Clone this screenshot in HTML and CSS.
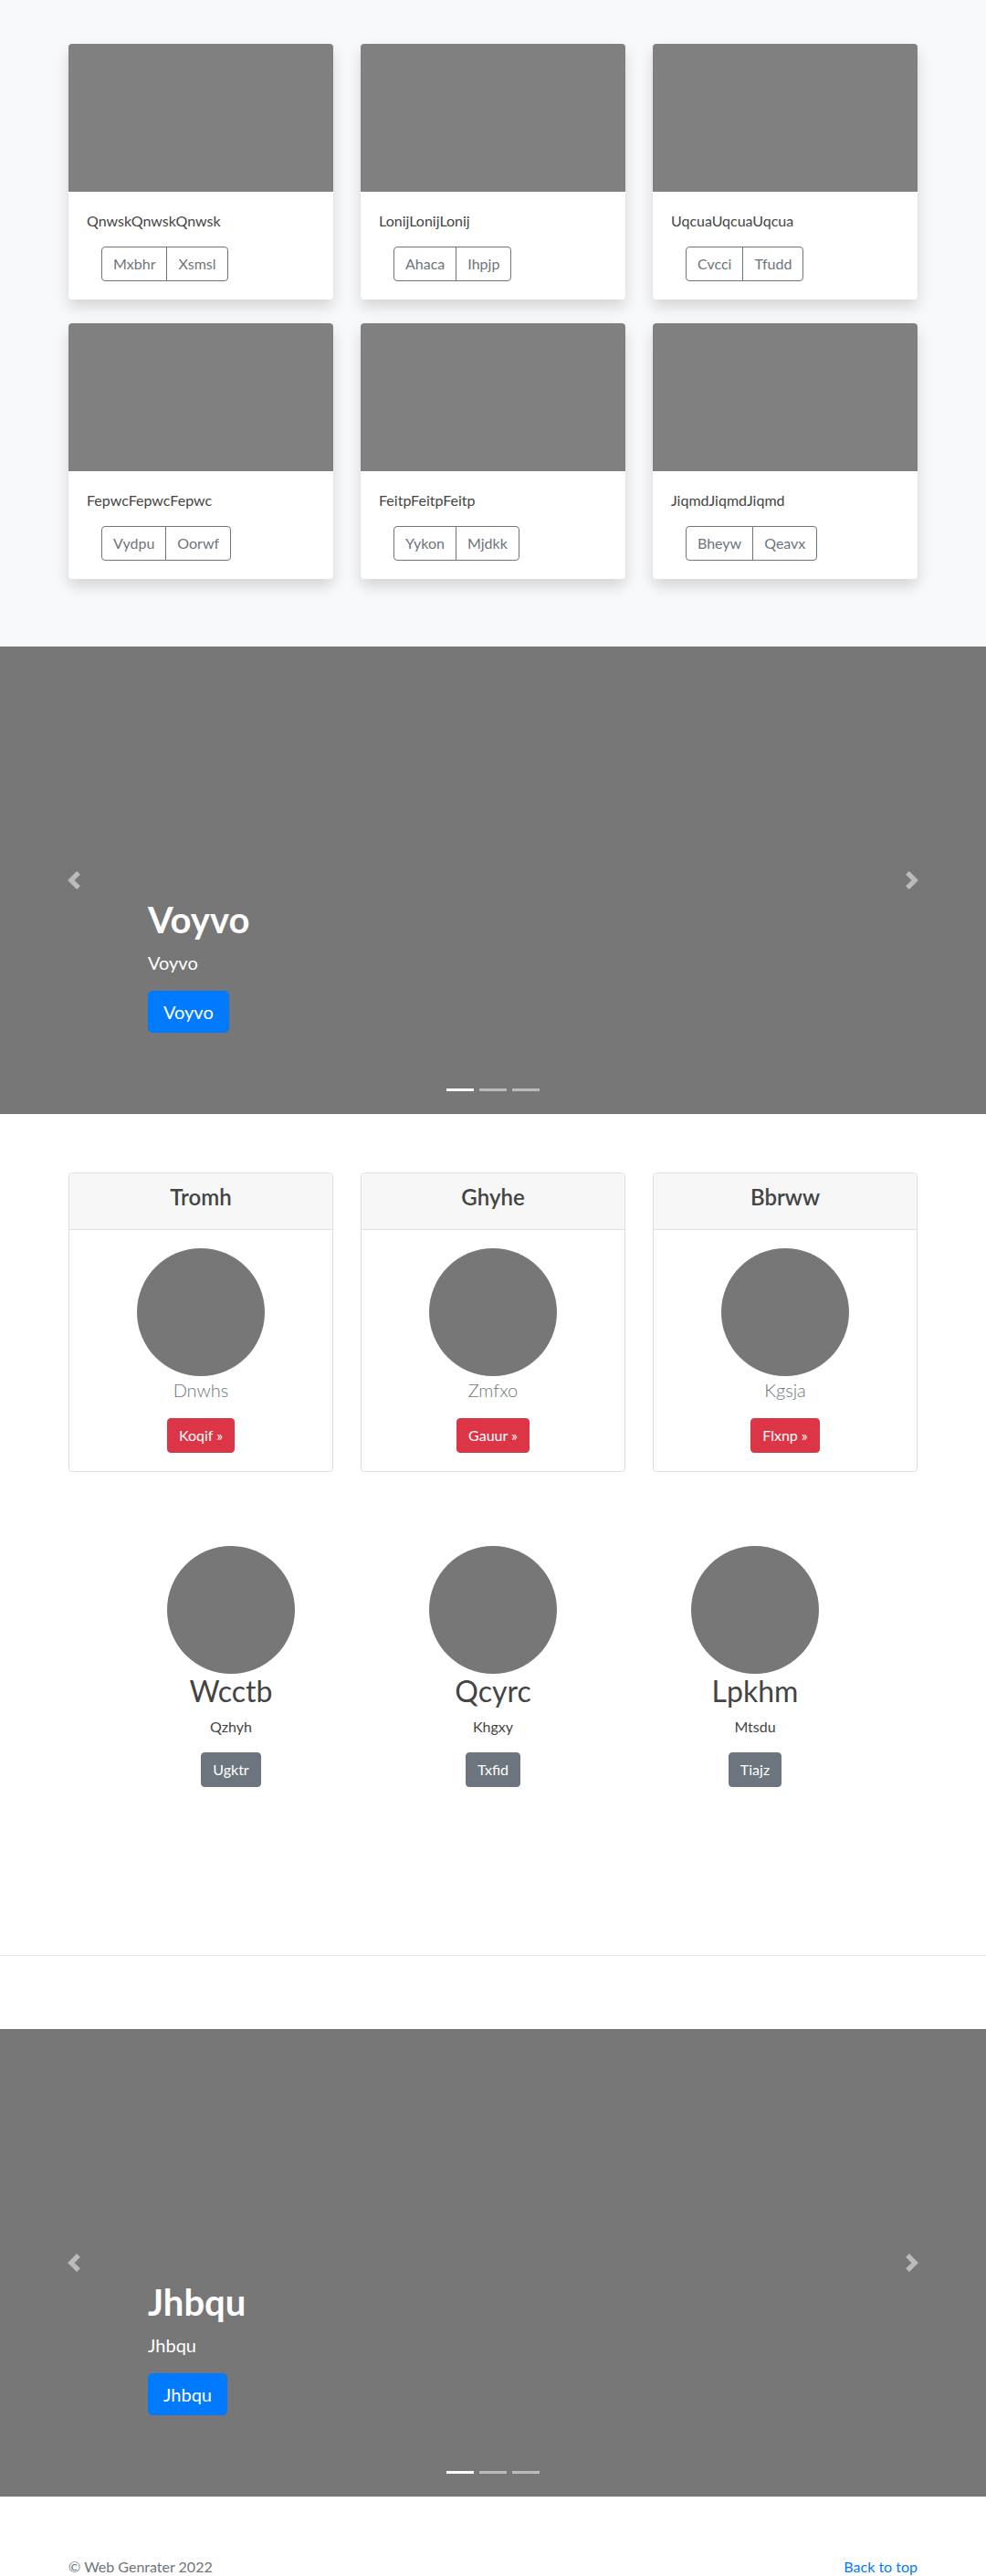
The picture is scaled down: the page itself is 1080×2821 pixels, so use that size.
FILE: index.html
```html
<!DOCTYPE html>
<html lang="en">
<head>
<meta charset="utf-8">
<title>Web Genrater</title>
<link rel="stylesheet" href="styles.css">
</head>
<body>
<section class="album">
  <div class="container">
    <div class="grid3 album-grid">
      <div class="card">
        <div class="card-img"></div>
        <div class="card-body">
          <p class="card-text">QnwskQnwskQnwsk</p>
          <div class="btn-group"><span class="btn btn-outline">Mxbhr</span><span class="btn btn-outline">Xsmsl</span></div>
        </div>
      </div>
      <div class="card">
        <div class="card-img"></div>
        <div class="card-body">
          <p class="card-text">LonijLonijLonij</p>
          <div class="btn-group"><span class="btn btn-outline">Ahaca</span><span class="btn btn-outline">Ihpjp</span></div>
        </div>
      </div>
      <div class="card">
        <div class="card-img"></div>
        <div class="card-body">
          <p class="card-text">UqcuaUqcuaUqcua</p>
          <div class="btn-group"><span class="btn btn-outline">Cvcci</span><span class="btn btn-outline">Tfudd</span></div>
        </div>
      </div>
      <div class="card">
        <div class="card-img"></div>
        <div class="card-body">
          <p class="card-text">FepwcFepwcFepwc</p>
          <div class="btn-group"><span class="btn btn-outline">Vydpu</span><span class="btn btn-outline">Oorwf</span></div>
        </div>
      </div>
      <div class="card">
        <div class="card-img"></div>
        <div class="card-body">
          <p class="card-text">FeitpFeitpFeitp</p>
          <div class="btn-group"><span class="btn btn-outline">Yykon</span><span class="btn btn-outline">Mjdkk</span></div>
        </div>
      </div>
      <div class="card">
        <div class="card-img"></div>
        <div class="card-body">
          <p class="card-text">JiqmdJiqmdJiqmd</p>
          <div class="btn-group"><span class="btn btn-outline">Bheyw</span><span class="btn btn-outline">Qeavx</span></div>
        </div>
      </div>
    </div>
  </div>
</section>

<div class="carousel">
  <div class="caption">
    <h1 class="caption-title">Voyvo</h1>
    <p class="caption-lead">Voyvo</p>
    <span class="btn btn-lg btn-primary">Voyvo</span>
  </div>
  <span class="ctrl ctrl-prev"><svg viewBox="0 0 8 8" width="20" height="20"><path fill="#fff" d="M5.25 0l-4 4 4 4 1.5-1.5-2.5-2.5 2.5-2.5-1.5-1.5z"/></svg></span>
  <span class="ctrl ctrl-next"><svg viewBox="0 0 8 8" width="20" height="20"><path fill="#fff" d="M2.75 0l-1.5 1.5 2.5 2.5-2.5 2.5 1.5 1.5 4-4-4-4z"/></svg></span>
  <div class="indicators"><span class="ind active"></span><span class="ind"></span><span class="ind"></span></div>
</div>

<section class="pricing">
  <div class="container">
    <div class="grid3">
      <div class="pcard">
        <div class="pcard-header"><h4 class="pcard-title">Tromh</h4></div>
        <div class="pcard-body">
          <div class="circle"></div>
          <p class="pcard-name">Dnwhs</p>
          <span class="btn btn-danger">Koqif »</span>
        </div>
      </div>
      <div class="pcard">
        <div class="pcard-header"><h4 class="pcard-title">Ghyhe</h4></div>
        <div class="pcard-body">
          <div class="circle"></div>
          <p class="pcard-name">Zmfxo</p>
          <span class="btn btn-danger">Gauur »</span>
        </div>
      </div>
      <div class="pcard">
        <div class="pcard-header"><h4 class="pcard-title">Bbrww</h4></div>
        <div class="pcard-body">
          <div class="circle"></div>
          <p class="pcard-name">Kgsja</p>
          <span class="btn btn-danger">Flxnp »</span>
        </div>
      </div>
    </div>
  </div>
</section>

<section class="team">
  <div class="team-grid">
    <div class="member">
      <div class="circle"></div>
      <h2 class="member-name">Wcctb</h2>
      <p class="member-role">Qzhyh</p>
      <span class="btn btn-secondary">Ugktr</span>
    </div>
    <div class="member">
      <div class="circle"></div>
      <h2 class="member-name">Qcyrc</h2>
      <p class="member-role">Khgxy</p>
      <span class="btn btn-secondary">Txfid</span>
    </div>
    <div class="member">
      <div class="circle"></div>
      <h2 class="member-name">Lpkhm</h2>
      <p class="member-role">Mtsdu</p>
      <span class="btn btn-secondary">Tiajz</span>
    </div>
  </div>
</section>

<hr class="divider">

<div class="carousel">
  <div class="caption">
    <h1 class="caption-title">Jhbqu</h1>
    <p class="caption-lead">Jhbqu</p>
    <span class="btn btn-lg btn-primary">Jhbqu</span>
  </div>
  <span class="ctrl ctrl-prev"><svg viewBox="0 0 8 8" width="20" height="20"><path fill="#fff" d="M5.25 0l-4 4 4 4 1.5-1.5-2.5-2.5 2.5-2.5-1.5-1.5z"/></svg></span>
  <span class="ctrl ctrl-next"><svg viewBox="0 0 8 8" width="20" height="20"><path fill="#fff" d="M2.75 0l-1.5 1.5 2.5 2.5-2.5 2.5 1.5 1.5 4-4-4-4z"/></svg></span>
  <div class="indicators"><span class="ind active"></span><span class="ind"></span><span class="ind"></span></div>
</div>

<footer class="footer">
  <div class="container footer-row">
    <p class="copy">© Web Genrater 2022</p>
    <a class="back" href="#">Back to top</a>
  </div>
</footer>
</body>
</html>
```

FILE: styles.css
```css
* { box-sizing: border-box; }

html, body {
  margin: 0;
  padding: 0;
}

body {
  font-family: Lato, "Noto Sans", "Liberation Sans", sans-serif;
  font-size: 16px;
  line-height: 1.5;
  color: #212529;
  background: #fff;
}

p, h1, h2, h4 { margin: 0; }

.container {
  width: 960px;
  margin: 0 auto;
  padding: 0 15px;
}

.grid3 {
  display: grid;
  grid-template-columns: repeat(3, 290px);
  column-gap: 30px;
}

/* Album */
.album {
  background: #f8f9fa;
  padding: 48px 0 74px;
}

.album-grid { row-gap: 26px; }

.card {
  background: #fff;
  border-radius: 4px;
  box-shadow: 0 8px 16px rgba(0, 0, 0, 0.15);
  overflow: hidden;
}

.card-img {
  height: 162px;
  background: #808080;
}

.card-body {
  padding: 20px;
}

.card-text {
  margin-bottom: 16px;
  color: #444;
}

.btn-group {
  display: inline-flex;
  margin-left: 16px;
}

.btn {
  display: inline-block;
  font-size: 16px;
  line-height: 24px;
  padding: 6px 12px;
  border: 1px solid transparent;
  border-radius: 4px;
  text-align: center;
}

.btn-outline {
  color: #6c757d;
  border-color: #6c757d;
  background: transparent;
}

.btn-group .btn-outline:first-child {
  border-top-right-radius: 0;
  border-bottom-right-radius: 0;
}

.btn-group .btn-outline + .btn-outline {
  margin-left: -1px;
  border-top-left-radius: 0;
  border-bottom-left-radius: 0;
}

/* Carousel */
.carousel {
  position: relative;
  height: 512px;
  background: #777;
  display: flex;
  flex-direction: column;
  justify-content: flex-end;
  padding: 0 162px 89px;
}

.caption { color: #fff; }

.caption-title {
  font-size: 40px;
  line-height: 48px;
  font-weight: 700;
  margin-bottom: 8px;
}

.caption-lead {
  font-size: 20px;
  line-height: 30px;
  margin-bottom: 16px;
}

.btn-lg {
  font-size: 20px;
  line-height: 30px;
  padding: 7px 16px;
  border-radius: 5px;
}

.btn-primary {
  background: #007bff;
  border-color: #007bff;
  color: #fff;
}

.ctrl {
  position: absolute;
  top: 246px;
  width: 20px;
  height: 20px;
  opacity: 0.5;
  display: block;
}

.ctrl svg { display: block; }

.ctrl-prev { left: 71px; }
.ctrl-next { right: 71px; }

.indicators {
  position: absolute;
  left: 0;
  right: 0;
  bottom: 25px;
  display: flex;
  justify-content: center;
  gap: 6px;
}

.ind {
  width: 30px;
  height: 3px;
  background: #fff;
  opacity: 0.5;
}

.ind.active { opacity: 1; }

/* Pricing */
.pricing {
  padding-top: 64px;
}

.pcard {
  border: 1px solid #dfdfdf;
  border-radius: 4px;
  overflow: hidden;
  text-align: center;
}

.pcard-header {
  background: #f7f7f7;
  border-bottom: 1px solid #dfdfdf;
  padding: 12px 20px 20px;
}

.pcard-title {
  font-size: 24px;
  line-height: 28.8px;
  font-weight: 600;
  color: #444;
}

.pcard-body {
  padding: 20px;
  display: flex;
  flex-direction: column;
  align-items: center;
}

.circle {
  width: 140px;
  height: 140px;
  border-radius: 50%;
  background: #777;
}

.pcard-name {
  font-size: 20px;
  line-height: 30px;
  font-weight: 300;
  color: #6c757d;
  margin-bottom: 16px;
}

.btn-danger {
  background: #dc3545;
  border-color: #dc3545;
  color: #fff;
}

/* Team */
.team {
  padding-top: 81px;
  padding-bottom: 184px;
}

.team-grid {
  width: 861px;
  margin: 0 auto;
  display: grid;
  grid-template-columns: repeat(3, 1fr);
}

.member {
  display: flex;
  flex-direction: column;
  align-items: center;
  text-align: center;
}

.member-name {
  font-size: 32px;
  line-height: 38.4px;
  font-weight: 400;
  color: #444;
  margin-bottom: 8px;
}

.member-role {
  color: #444;
  margin-bottom: 16px;
}

.btn-secondary {
  background: #6c757d;
  border-color: #6c757d;
  color: #fff;
}

.divider {
  margin: 0 0 80px;
  border: 0;
  border-top: 1px solid #e5e5e5;
  height: 0;
}

/* Footer */
.footer {
  padding-top: 65px;
}

.footer-row {
  display: flex;
  justify-content: space-between;
}

.copy { color: #6c757d; }

.back {
  color: #007bff;
  text-decoration: none;
}
```
